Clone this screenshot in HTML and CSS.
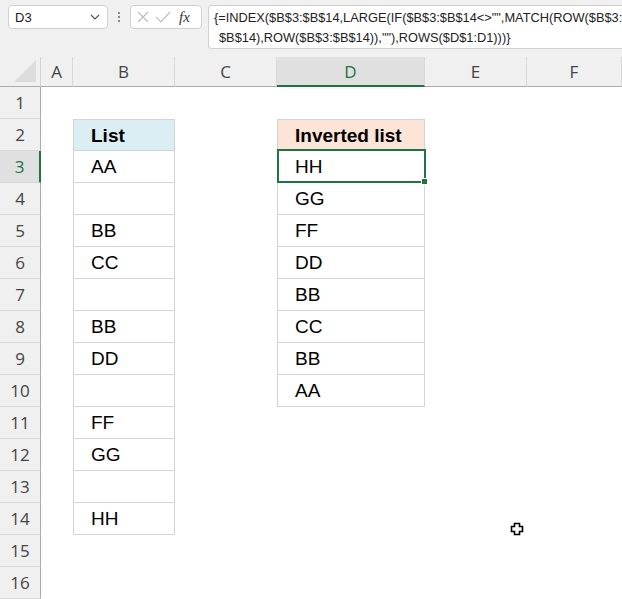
FILE: index.html
```html
<!DOCTYPE html>
<html>
<head>
<meta charset="utf-8">
<link rel="stylesheet" href="styles.css">
</head>
<body>
<div class="topbar">
  <div class="namebox">
    <span class="nb-text">D3</span>
    <svg class="chev" width="10" height="6" viewBox="0 0 10 6"><path d="M1 1 L5 5 L9 1" fill="none" stroke="#555" stroke-width="1.2"/></svg>
  </div>
  <div class="vdots"><span></span><span></span><span></span></div>
  <div class="fxbox">
    <svg width="14" height="14" viewBox="0 0 14 14"><path d="M2 2 L12 12 M12 2 L2 12" stroke="#bdbdbd" stroke-width="1.2" fill="none"/></svg>
    <svg width="16" height="14" viewBox="0 0 16 14"><path d="M1 7 L6 12 L15 2" stroke="#bdbdbd" stroke-width="1.2" fill="none"/></svg>
    <span class="fx">fx</span>
  </div>
  <div class="formula"><div class="fl">{=INDEX($B$3:$B$14,LARGE(IF($B$3:$B$14&lt;&gt;"",MATCH(ROW($B$3:</div><div class="fl fl2">$B$14),ROW($B$3:$B$14)),""),ROWS($D$1:D1)))}</div></div>
</div>
<div class="sheet">
  <div class="corner"><div class="tri"></div></div>
  <div class="ch">A</div><div class="ch">B</div><div class="ch">C</div><div class="ch sel">D</div><div class="ch">E</div><div class="ch">F</div>

  <div class="rh">1</div><div></div><div></div><div></div><div></div><div></div><div></div>
  <div class="rh">2</div><div></div><div class="t hd blue">List</div><div></div><div class="t hd peach">Inverted list</div><div></div><div></div>
  <div class="rh rsel">3</div><div></div><div class="t">AA</div><div></div><div class="t active">HH</div><div></div><div></div>
  <div class="rh">4</div><div></div><div class="t"></div><div></div><div class="t">GG</div><div></div><div></div>
  <div class="rh">5</div><div></div><div class="t">BB</div><div></div><div class="t">FF</div><div></div><div></div>
  <div class="rh">6</div><div></div><div class="t">CC</div><div></div><div class="t">DD</div><div></div><div></div>
  <div class="rh">7</div><div></div><div class="t"></div><div></div><div class="t">BB</div><div></div><div></div>
  <div class="rh">8</div><div></div><div class="t">BB</div><div></div><div class="t">CC</div><div></div><div></div>
  <div class="rh">9</div><div></div><div class="t">DD</div><div></div><div class="t">BB</div><div></div><div></div>
  <div class="rh">10</div><div></div><div class="t"></div><div></div><div class="t">AA</div><div></div><div></div>
  <div class="rh">11</div><div></div><div class="t">FF</div><div></div><div></div><div></div><div></div>
  <div class="rh">12</div><div></div><div class="t">GG</div><div></div><div></div><div></div><div></div>
  <div class="rh">13</div><div></div><div class="t"></div><div></div><div></div><div></div><div></div>
  <div class="rh">14</div><div></div><div class="t">HH</div><div></div><div></div><div class="cur"><svg width="14" height="14" viewBox="0 0 14 14"><path d="M4.5 1.5 H9.5 V4.5 H12.5 V9.5 H9.5 V12.5 H4.5 V9.5 H1.5 V4.5 H4.5 Z" fill="#fff" stroke="#000" stroke-width="1.6"/></svg></div><div></div>
  <div class="rh">15</div><div></div><div></div><div></div><div></div><div></div><div></div>
  <div class="rh">16</div><div></div><div></div><div></div><div></div><div></div><div></div>
</div>
</body>
</html>
```
FILE: styles.css
```css
html, body {
  margin: 0;
  padding: 0;
  background: #fff;
  overflow: hidden;
}
body {
  width: 622px;
  height: 599px;
  font-family: "Liberation Sans", Arial, sans-serif;
}
.topbar {
  height: 57px;
  background: #f0f0f0;
  display: flex;
  align-items: flex-start;
  padding: 5px 0 0 8px;
  box-sizing: border-box;
  overflow: hidden;
}
.namebox {
  width: 100px;
  height: 24px;
  box-sizing: border-box;
  background: #fff;
  border: 1px solid #d0d0d0;
  border-radius: 4px;
  display: flex;
  align-items: center;
  justify-content: space-between;
  padding: 0 7px 0 6px;
  font-size: 13px;
  color: #222;
}
.vdots {
  width: 22px;
  height: 24px;
  display: flex;
  flex-direction: column;
  align-items: center;
  justify-content: center;
  gap: 2px;
}
.vdots span {
  width: 2px;
  height: 2px;
  background: #8a8a8a;
}
.fxbox {
  width: 72px;
  height: 24px;
  box-sizing: border-box;
  background: #fff;
  border: 1px solid #d0d0d0;
  border-radius: 4px;
  display: flex;
  align-items: center;
  padding: 0 0 0 5px;
  gap: 5px;
}
.fx {
  font-family: "Liberation Serif", "Times New Roman", serif;
  font-style: italic;
  font-size: 15px;
  color: #333;
  margin-left: 3px;
}
.formula {
  margin-left: 6px;
  flex: 1;
  height: 44px;
  box-sizing: border-box;
  background: #fff;
  border: 1px solid #d0d0d0;
  border-right: none;
  border-radius: 4px 0 0 4px;
  padding: 2px 0 0 5px;
  font-size: 12.8px;
  color: #222;
  white-space: nowrap;
  overflow: hidden;
}
.fl {
  height: 20px;
  line-height: 20px;
}
.fl2 {
  padding-left: 5px;
}
.sheet {
  display: grid;
  grid-template-columns: 41px 32px 102px 102px 148px 102px 95px;
  grid-template-rows: 30px repeat(16, 32px);
}
.corner {
  background: #f0f0f0;
  border-right: 1px solid #d4d4d4;
  border-bottom: 1px solid #ababab;
  box-sizing: border-box;
  position: relative;
}
.tri {
  position: absolute;
  right: 4px;
  bottom: 4px;
  width: 0;
  height: 0;
  border-left: 22px solid transparent;
  border-bottom: 22px solid #dcdcdc;
}
.ch {
  background: #f0f0f0;
  border-right: 1px solid #d8d8d8;
  border-bottom: 1px solid #ababab;
  box-sizing: border-box;
  display: flex;
  align-items: center;
  justify-content: center;
  font-family: "Open Sans", "Liberation Sans", sans-serif;
  font-size: 17px;
  color: #444;
}
.ch.sel {
  background: #e0e0e0;
  border-bottom: 2px solid #217346;
  color: #217346;
}
.rh {
  background: #f0f0f0;
  border-right: 1px solid #ababab;
  border-bottom: 1px solid #d8d8d8;
  box-sizing: border-box;
  display: flex;
  align-items: center;
  justify-content: center;
  font-family: "Open Sans", "Liberation Sans", sans-serif;
  font-size: 17px;
  color: #444;
}
.rh.rsel {
  background: #e0e0e0;
  border-right: 2px solid #217346;
  color: #217346;
}
.t {
  border-left: 1px solid #d4d4d4;
  border-right: 1px solid #d4d4d4;
  border-bottom: 1px solid #d4d4d4;
  box-sizing: border-box;
  display: flex;
  align-items: center;
  padding: 1px 0 0 17px;
  font-family: "Liberation Sans", Arial, sans-serif;
  font-size: 19px;
  color: #000;
}
.hd {
  border-top: 1px solid #d4d4d4;
  font-weight: bold;
}
.blue { background: #daeef3; }
.peach { background: #fce4d6; }
.active {
  position: relative;
}
.active::before {
  content: "";
  position: absolute;
  left: -1px;
  top: -2px;
  right: -2px;
  bottom: -1px;
  border: 2px solid #217346;
}
.active::after {
  content: "";
  position: absolute;
  right: -4px;
  bottom: -3px;
  width: 5px;
  height: 5px;
  background: #217346;
  border: 1px solid #fff;
}
.cur {
  position: relative;
}
.cur svg {
  position: absolute;
  left: 85px;
  top: 19px;
}
```
